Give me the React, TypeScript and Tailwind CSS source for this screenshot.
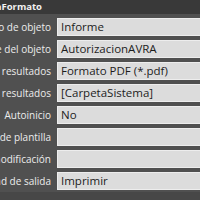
import React from 'react';

interface PropRowProps {
  label: string;
  value: string;
}

const rows: PropRowProps[] = [
  { label: 'Tipo de objeto', value: 'Informe' },
  { label: 'Nombre del objeto', value: 'AutorizacionAVRA' },
  { label: 'Formato de resultados', value: 'Formato PDF (*.pdf)' },
  { label: 'Carpeta de resultados', value: '[CarpetaSistema]' },
  { label: 'Autoinicio', value: 'No' },
  { label: 'Archivo de plantilla', value: '' },
  { label: 'Fecha de modificación', value: '' },
  { label: 'Modalidad de salida', value: 'Imprimir' },
];

const PropRow: React.FC<PropRowProps> = ({ label, value }) => (
  <div className="flex items-center h-[22px]">
    <div className="w-[51px] flex justify-end shrink-0 whitespace-nowrap text-[#ececec] text-[10px]">
      <span>{label}</span>
    </div>
    <div className="ml-[6px] flex-1 h-[18px] bg-[#dcdcdc] border border-[#ededed] border-r-0 flex items-center pl-[3px] text-[#1c1c1c] text-[11.5px] whitespace-nowrap overflow-hidden">
      {value}
    </div>
  </div>
);

export default function App() {
  return (
    <div
      className="w-[200px] h-[200px] overflow-hidden bg-[#505050] flex flex-col leading-none"
      style={{ fontFamily: '"Open Sans", "Liberation Sans", sans-serif' }}
    >
      <div className="h-[14px] bg-[#393939] flex items-center shrink-0">
        <div className="w-[42px] flex justify-end whitespace-nowrap font-bold text-[#f2f2f2] text-[9.5px]">
          <span>PlantillaFormato</span>
        </div>
      </div>
      <div className="flex flex-col pt-[2px]">
        {rows.map((r, i) => (
          <PropRow key={i} label={r.label} value={r.value} />
        ))}
      </div>
      <div className="flex-1 bg-[#474747]" />
    </div>
  );
}
